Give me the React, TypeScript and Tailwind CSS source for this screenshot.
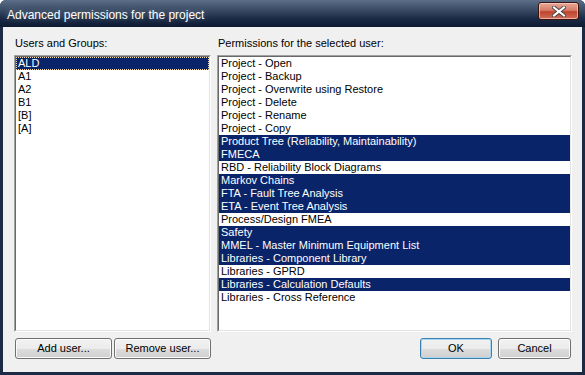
import React from 'react';

const users = ['ALD', 'A1', 'A2', 'B1', '[B]', '[A]'];

const permissions: { label: string; on: boolean }[] = [
  { label: 'Project - Open', on: false },
  { label: 'Project - Backup', on: false },
  { label: 'Project - Overwrite using Restore', on: false },
  { label: 'Project - Delete', on: false },
  { label: 'Project - Rename', on: false },
  { label: 'Project - Copy', on: false },
  { label: 'Product Tree (Reliability, Maintainability)', on: true },
  { label: 'FMECA', on: true },
  { label: 'RBD - Reliability Block Diagrams', on: false },
  { label: 'Markov Chains', on: true },
  { label: 'FTA - Fault Tree Analysis', on: true },
  { label: 'ETA - Event Tree Analysis', on: true },
  { label: 'Process/Design FMEA', on: false },
  { label: 'Safety', on: true },
  { label: 'MMEL - Master Minimum Equipment List', on: true },
  { label: 'Libraries - Component Library', on: true },
  { label: 'Libraries - GPRD', on: false },
  { label: 'Libraries - Calculation Defaults', on: true },
  { label: 'Libraries - Cross Reference', on: false },
];

function ListBox({ className, children }: { className: string; children: React.ReactNode }) {
  return (
    <div className={`border border-t-[#a0a0a0] border-l-[#a0a0a0] border-r-white border-b-white ${className}`}>
      <div className="h-full border border-t-[#696969] border-l-[#696969] border-r-[#e3e3e3] border-b-[#e3e3e3] bg-white overflow-hidden">
        {children}
      </div>
    </div>
  );
}

function Button({ label, className = '', isDefault = false }: { label: string; className?: string; isDefault?: boolean }) {
  return (
    <button
      className={`h-[21px] rounded-[3px] border text-[11px] text-black leading-none bg-[linear-gradient(to_bottom,#f2f2f2_0%,#ebebeb_50%,#dddddd_51%,#cfcfcf_100%)] ${
        isDefault ? 'border-[#3c7fb1] shadow-[inset_0_0_0_1px_#a8d7f2]' : 'border-[#707070] shadow-[inset_0_0_0_1px_#fbfbfb]'
      } ${className}`}
    >
      {label}
    </button>
  );
}

export default function App() {
  return (
    <div className="w-[585px] h-[375px] flex flex-col bg-[#1c2b43] rounded-t-[6px] overflow-hidden font-['Liberation_Sans',Arial,sans-serif]">
      <div className="h-[27px] flex items-start justify-between bg-[linear-gradient(to_bottom,#5d6f88_0%,#3b4c66_35%,#1a2a45_70%,#0d1a31_100%)]">
        <span className="pl-[7px] pt-[6px] text-[12px] text-white [text-shadow:0_0_6px_rgba(255,255,255,0.35)]">
          Advanced permissions for the project
        </span>
        <div className="mt-[2px] mr-[6px] w-[41px] h-[18px] rounded-[3px] border border-[#3a1510] shadow-[inset_0_0_0_1px_rgba(255,220,210,0.6)] bg-[linear-gradient(to_bottom,#e8a898_0%,#d77d6a_45%,#c0432d_55%,#d0705a_100%)] flex items-center justify-center">
          <svg width="14" height="11" viewBox="0 0 14 11">
            <path d="M2 1.5 L12 9.5 M12 1.5 L2 9.5" stroke="#4a4a4a" strokeWidth="4" strokeLinecap="square" />
            <path d="M2 1.5 L12 9.5 M12 1.5 L2 9.5" stroke="#ffffff" strokeWidth="2" strokeLinecap="square" />
          </svg>
        </div>
      </div>

      <div className="flex-1 mx-[3px] mb-[3px] bg-[#f0f0f0] flex flex-col pl-[11px] pr-[10px] pt-[10px] text-[11px] text-black">
        <div className="flex gap-[6px]">
          <div className="w-[197px] flex flex-col">
            <div className="h-[13px] leading-[13px] pl-[1px] mb-[5px]">Users and Groups:</div>
            <ListBox className="h-[277px]">
              {users.map((u, i) => (
                <div
                  key={u}
                  className={`h-[13px] leading-[11px] pl-[1px] ${
                    i === 0 ? 'bg-[#0a246a] text-white border border-dotted border-[#f5dcae]' : 'border border-transparent'
                  }`}
                >
                  {u}
                </div>
              ))}
            </ListBox>
          </div>
          <div className="w-[355px] flex flex-col">
            <div className="h-[13px] leading-[13px] pl-[1px] mb-[5px]">Permissions for the selected user:</div>
            <ListBox className="h-[277px]">
              {permissions.map((p) => (
                <div
                  key={p.label}
                  className={`h-[13px] leading-[13px] pl-[2px] whitespace-nowrap ${p.on ? 'bg-[#0a246a] text-white' : ''}`}
                >
                  {p.label}
                </div>
              ))}
            </ListBox>
          </div>
        </div>

        <div className="flex items-start mt-[6px]">
          <Button label="Add user..." className="w-[97px] ml-[1px]" />
          <Button label="Remove user..." className="w-[97px] ml-[2px]" />
          <div className="flex-1" />
          <Button label="OK" className="w-[72px]" isDefault />
          <Button label="Cancel" className="w-[73px] ml-[6px] mr-[1px]" />
        </div>
      </div>
    </div>
  );
}
